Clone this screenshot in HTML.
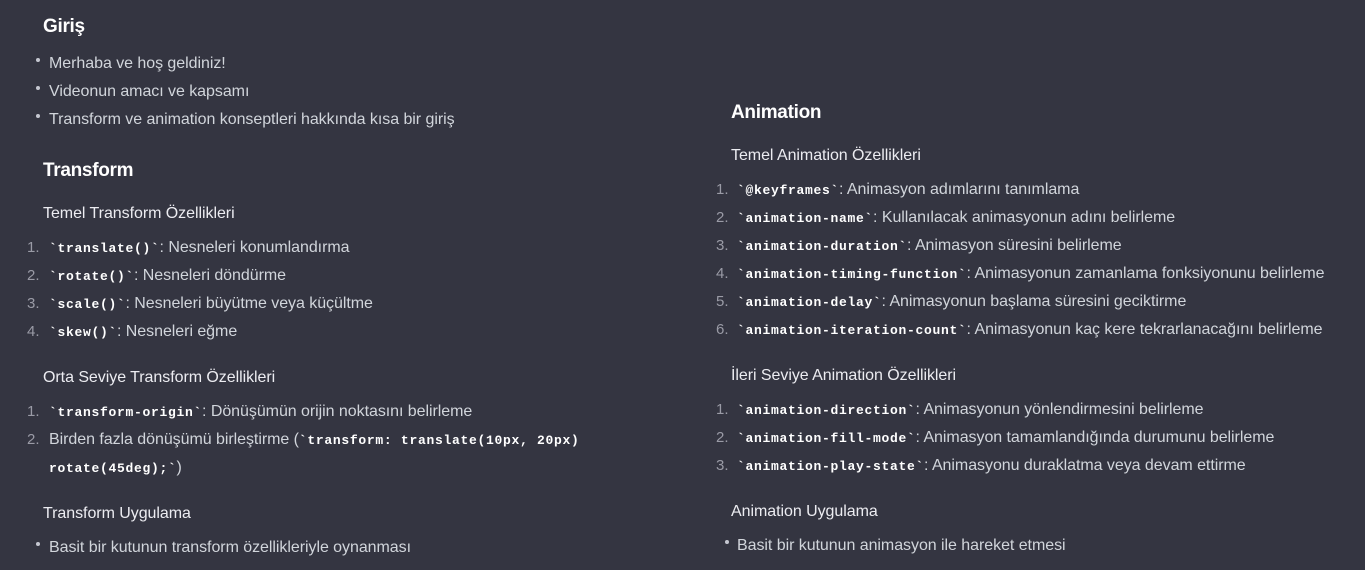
<!DOCTYPE html>
<html><head><meta charset="utf-8"><style>
body{margin:0;width:1365px;height:570px;background:#343541;overflow:hidden;font-family:"Liberation Sans",sans-serif;color:#d1d5db;position:relative}
.l{position:absolute;white-space:nowrap;font-size:16px;line-height:20px;margin-top:2px;letter-spacing:-0.05px}
.h{color:#fff;font-weight:bold;font-size:19px;line-height:24px;letter-spacing:-0.3px}
.s{color:#ececf1}
code{font-family:"Liberation Mono",monospace;font-weight:bold;font-size:13px;letter-spacing:0.7px;color:#fff}
.n{position:absolute;color:#9a9ba6;font-size:15px;line-height:20px;margin-top:2px}
.b{position:absolute;width:4px;height:4px;border-radius:50%;background:#c5c7d0}
</style></head><body>
<div class="l h" style="left:43px;top:13px">Giriş</div>
<div class="b" style="left:36px;top:58px"></div><div class="l" style="left:49px;top:52px">Merhaba ve hoş geldiniz!</div>
<div class="b" style="left:36px;top:86px"></div><div class="l" style="left:49px;top:80px">Videonun amacı ve kapsamı</div>
<div class="b" style="left:36px;top:114px"></div><div class="l" style="left:49px;top:108px">Transform ve animation konseptleri hakkında kısa bir giriş</div>
<div class="l h" style="left:43px;top:157px">Transform</div>
<div class="l s" style="left:43px;top:202px">Temel Transform Özellikleri</div>
<div class="n" style="left:27px;top:236px">1.</div><div class="l" style="left:49px;top:236px"><code>`translate()`</code>: Nesneleri konumlandırma</div>
<div class="n" style="left:27px;top:264px">2.</div><div class="l" style="left:49px;top:264px"><code>`rotate()`</code>: Nesneleri döndürme</div>
<div class="n" style="left:27px;top:292px">3.</div><div class="l" style="left:49px;top:292px"><code>`scale()`</code>: Nesneleri büyütme veya küçültme</div>
<div class="n" style="left:27px;top:320px">4.</div><div class="l" style="left:49px;top:320px"><code>`skew()`</code>: Nesneleri eğme</div>
<div class="l s" style="left:43px;top:366px">Orta Seviye Transform Özellikleri</div>
<div class="n" style="left:27px;top:400px">1.</div><div class="l" style="left:49px;top:400px"><code>`transform-origin`</code>: Dönüşümün orijin noktasını belirleme</div>
<div class="n" style="left:27px;top:428px">2.</div><div class="l" style="left:49px;top:428px">Birden fazla dönüşümü birleştirme (<code>`transform: translate(10px, 20px)</code></div>
<div class="l" style="left:49px;top:456px"><code>rotate(45deg);`</code>)</div>
<div class="l s" style="left:43px;top:502px">Transform Uygulama</div>
<div class="b" style="left:36px;top:542px"></div><div class="l" style="left:49px;top:536px">Basit bir kutunun transform özellikleriyle oynanması</div>

<div class="l h" style="left:731px;top:99px">Animation</div>
<div class="l s" style="left:731px;top:144px">Temel Animation Özellikleri</div>
<div class="n" style="left:716px;top:178px">1.</div><div class="l" style="left:737px;top:178px"><code>`@keyframes`</code>: Animasyon adımlarını tanımlama</div>
<div class="n" style="left:716px;top:206px">2.</div><div class="l" style="left:737px;top:206px"><code>`animation-name`</code>: Kullanılacak animasyonun adını belirleme</div>
<div class="n" style="left:716px;top:234px">3.</div><div class="l" style="left:737px;top:234px"><code>`animation-duration`</code>: Animasyon süresini belirleme</div>
<div class="n" style="left:716px;top:262px">4.</div><div class="l" style="left:737px;top:262px"><code>`animation-timing-function`</code>: Animasyonun zamanlama fonksiyonunu belirleme</div>
<div class="n" style="left:716px;top:290px">5.</div><div class="l" style="left:737px;top:290px"><code>`animation-delay`</code>: Animasyonun başlama süresini geciktirme</div>
<div class="n" style="left:716px;top:318px">6.</div><div class="l" style="left:737px;top:318px"><code>`animation-iteration-count`</code>: Animasyonun kaç kere tekrarlanacağını belirleme</div>
<div class="l s" style="left:731px;top:364px">İleri Seviye Animation Özellikleri</div>
<div class="n" style="left:716px;top:398px">1.</div><div class="l" style="left:737px;top:398px"><code>`animation-direction`</code>: Animasyonun yönlendirmesini belirleme</div>
<div class="n" style="left:716px;top:426px">2.</div><div class="l" style="left:737px;top:426px"><code>`animation-fill-mode`</code>: Animasyon tamamlandığında durumunu belirleme</div>
<div class="n" style="left:716px;top:454px">3.</div><div class="l" style="left:737px;top:454px"><code>`animation-play-state`</code>: Animasyonu duraklatma veya devam ettirme</div>
<div class="l s" style="left:731px;top:500px">Animation Uygulama</div>
<div class="b" style="left:725px;top:540px"></div><div class="l" style="left:737px;top:534px">Basit bir kutunun animasyon ile hareket etmesi</div>
</body></html>
